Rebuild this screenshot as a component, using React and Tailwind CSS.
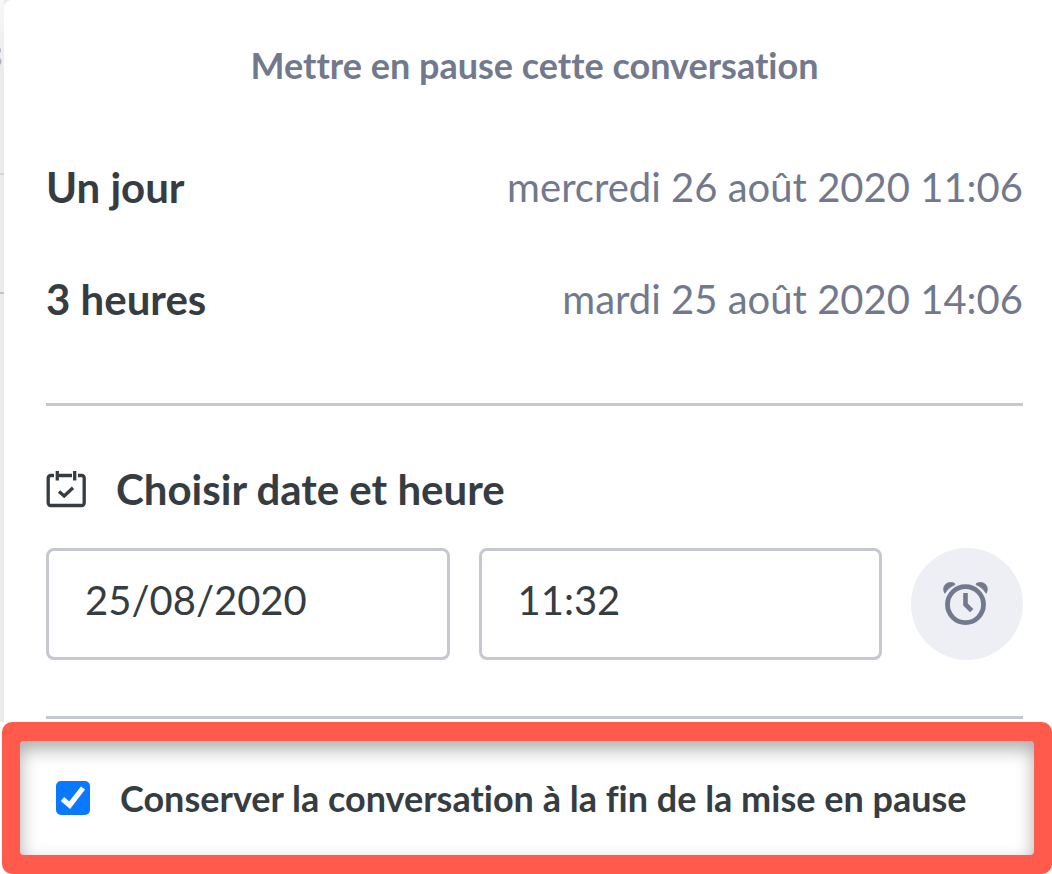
import { useState } from "react";

const PRESETS = [
  { label: "Un jour", date: "mercredi 26 août 2020 11:06" },
  { label: "3 heures", date: "mardi 25 août 2020 14:06" },
];

function CalendarCheckIcon() {
  return (
    <svg width="40" height="38" viewBox="0 0 40 38" fill="none" stroke="currentColor" strokeWidth="3.3" aria-hidden="true">
      <path d="M8 5.500H4.700A2.500 2.500 0 0 0 2.200 8v25a2.500 2.500 0 0 0 2.500 2.500h31a2.500 2.500 0 0 0 2.500-2.500V8a2.500 2.500 0 0 0-2.500-2.500H32M12.500 5.500H26" />
      <path d="M11.300 1v9.500M28.700 1v9.500" />
      <path d="m13 21.500 5.200 4.500 8.800-8.200" />
    </svg>
  );
}

function AlarmIcon() {
  return (
    <svg className="overflow-visible" width="46" height="46" viewBox="0 0 46 46" fill="none" aria-hidden="true">
      <circle cx="21.500" cy="23.600" r="18" stroke="currentColor" strokeWidth="4.800" />
      <path d="M21.500 12v11.500l6.200 6.200" stroke="currentColor" strokeWidth="4.600" />
      <path d="M.8 12.300C-3 5 3.500-.8 10.500 2.300L11 3.600C6.500 5.600 3.500 8.300.8 12.300Z" fill="currentColor" stroke="currentColor" strokeWidth=".8" />
      <path d="M42.200 12.300C46 5 39.500-.8 32.500 2.300L32 3.600C36.500 5.600 39.500 8.300 42.200 12.300Z" fill="currentColor" stroke="currentColor" strokeWidth=".8" />
    </svg>
  );
}

export default function App() {
  const [date, setDate] = useState("25/08/2020");
  const [time, setTime] = useState("11:32");
  const [keep, setKeep] = useState(true);

  return (
    <main className="min-h-screen bg-white font-['Lato','Open_Sans',sans-serif] text-[#363d42] [font-variant-ligatures:none]">
      <div className="flex bg-[#ebebeb]">
        <div className="w-1 shrink-0" aria-hidden="true">
          <div className="h-[175px] border-b-2 border-[#d5d5d7] bg-linear-to-b from-[#f7f7f7] to-[#ebebeb] to-40% pt-12">
            <svg width="2" height="18" viewBox="0 0 2 18" fill="#a9afbf">
              <path d="M0 0q2 2 0 5ZM0 10q3 3.500 0 7Z" />
            </svg>
          </div>
          <div className="h-[119px] border-b-2 border-[#bfc4cb]" />
        </div>
        <section className="min-w-0 flex-1 rounded-tl-lg bg-white pb-[3px] pl-[42px] pr-[29px] pt-[43px]">
          <h1 className="text-center text-[36px] font-bold leading-[44px] text-[#73798d]">
            Mettre en pause cette conversation
          </h1>
          <ul className="mt-[76px] flex flex-col gap-16">
            {PRESETS.map((preset) => (
              <li key={preset.label}>
                <button type="button" className="flex w-full items-center justify-between leading-[48px]">
                  <span className="text-[42px] font-bold">{preset.label}</span>
                  <span className="text-[40px] text-[#73798d]">{preset.date}</span>
                </button>
              </li>
            ))}
          </ul>
          <hr className="mt-20 border-t-[3px] border-[#c5c8cf]" />
          <h2 className="mt-[59px] flex items-center gap-[30px] text-[42px] font-bold leading-[48px]">
            <CalendarCheckIcon />
            Choisir date et heure
          </h2>
          <form className="mt-[35px] flex gap-[29px]" onSubmit={(e) => e.preventDefault()}>
            <input
              aria-label="Date"
              value={date}
              onChange={(e) => setDate(e.target.value)}
              className="h-28 min-w-0 flex-1 rounded-lg border-[3px] border-[#c5c8cf] bg-white px-9 pb-2 text-[40px]"
            />
            <input
              aria-label="Heure"
              value={time}
              onChange={(e) => setTime(e.target.value)}
              className="h-28 min-w-0 flex-1 rounded-lg border-[3px] border-[#c5c8cf] bg-white px-9 pb-2 text-[40px]"
            />
            <button
              type="submit"
              aria-label="Mettre en pause"
              className="flex size-28 shrink-0 items-center justify-center rounded-full bg-[#eeeff5] text-[#73798d]"
            >
              <AlarmIcon />
            </button>
          </form>
          <hr className="mt-14 border-t-[3px] border-[#c5c8cf]" />
        </section>
      </div>
      <div className="pl-0.5">
        <div className="rounded-[10px] bg-[#ff5a4c] px-[18px] py-[19px]">
          <label className="flex h-[114px] items-center gap-[30px] rounded-[4px] bg-white pl-9 shadow-[inset_0_8px_18px_rgba(0,0,0,0.33)]">
            <span className="grid size-[34px] shrink-0 place-items-center">
              <input
                type="checkbox"
                checked={keep}
                onChange={(e) => setKeep(e.target.checked)}
                className="peer col-start-1 row-start-1 size-[34px] appearance-none rounded-[5px] border-2 border-[#8b8f96] checked:border-[#0a78ff] checked:bg-[#0a78ff]"
              />
              <svg className="pointer-events-none invisible col-start-1 row-start-1 peer-checked:visible" width="34" height="34" viewBox="0 0 34 34" fill="none" aria-hidden="true">
                <path d="m6.500 18 7.200 6.200L27 7" stroke="#fff" strokeWidth="5.200" />
              </svg>
            </span>
            <span className="text-[36px] font-bold leading-[44px]">Conserver la conversation à la fin de la mise en pause</span>
          </label>
        </div>
      </div>
    </main>
  );
}
